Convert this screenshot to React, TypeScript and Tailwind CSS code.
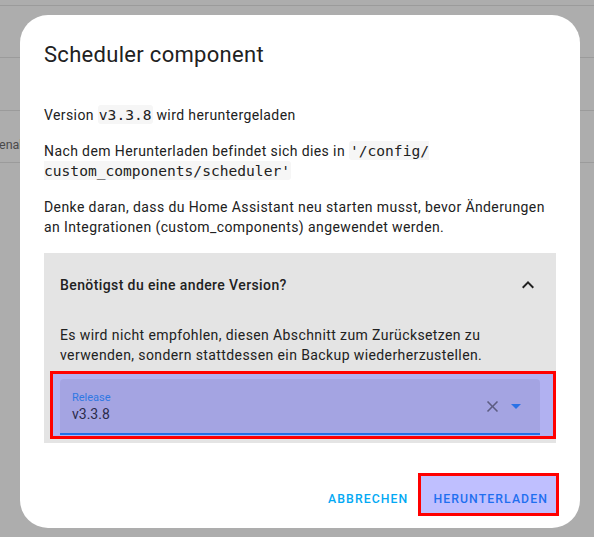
import React from "react";

function ChevronUp() {
  return (
    <svg width="24" height="24" viewBox="0 0 24 24" className="block">
      <path d="M7.41,15.41L12,10.83L16.59,15.41L18,14L12,8L6,14L7.41,15.41Z" fill="#212121" />
    </svg>
  );
}

function CloseIcon() {
  return (
    <svg width="19" height="19" viewBox="0 0 24 24" className="block">
      <path
        d="M19,6.41L17.59,5L12,10.59L6.41,5L5,6.41L10.59,12L5,17.59L6.41,19L12,13.41L17.59,19L19,17.59L13.41,12L19,6.41Z"
        fill="#5d5d82"
      />
    </svg>
  );
}

function MenuDown() {
  return (
    <svg width="24" height="24" viewBox="0 0 24 24" className="block">
      <path d="M7,10L12,15L17,10H7Z" fill="#2a72e6" />
    </svg>
  );
}

function Code({ children }: { children: React.ReactNode }) {
  return (
    <code className="font-['DejaVu_Sans_Mono',monospace] text-[14.6px] tracking-normal bg-[#f6f6f6] px-[1px] py-[1px] rounded-[3px] text-[#212121]">
      {children}
    </code>
  );
}

export default function App() {
  return (
    <div className="relative w-[594px] h-[537px] overflow-hidden bg-[#adadad] font-[Roboto,sans-serif]">
      {/* background page rows */}
      <div className="flex flex-col">
        <div className="h-[5px]" />
        <div className="h-[52px] border-t border-[#9b9b9b]" />
        <div className="h-[53px] border-t border-[#9b9b9b]" />
        <div className="h-[52px] border-t border-[#9b9b9b] pt-[24px]">
          <span className="block -ml-[1px] text-[12.5px] leading-[20px] text-[#4a4a4a]">enabled</span>
        </div>
        <div className="border-t border-[#9b9b9b]" />
      </div>

      {/* dialog */}
      <div className="absolute left-[20px] top-[15px] w-[560px] h-[513px] rounded-[28px] bg-white flex flex-col px-[24px] pt-[24px]">
        <div className="text-[22px] leading-[32px] tracking-[0.3px] text-[#212121]">Scheduler component</div>

        <div className="mt-[34px] flex flex-col gap-[16px] text-[14px] leading-[20px] tracking-[0.4px] text-[#212121]">
          <p>
            Version <Code>v3.3.8</Code> wird heruntergeladen
          </p>
          <p>
            Nach dem Herunterladen befindet sich dies in{" "}
            <Code>
              '/config/
              <br />
              custom_components/scheduler'
            </Code>
          </p>
          <p>
            Denke daran, dass du Home Assistant neu starten musst, bevor Änderungen an Integrationen
            (custom_components) angewendet werden.
          </p>
        </div>

        {/* expansion panel */}
        <div className="mt-[16px] bg-[#e4e4e4] flex flex-col pb-[4px]">
          <div className="h-[64px] flex items-center justify-between pl-[16px] pr-[16px]">
            <span className="text-[14px] leading-[20px] tracking-[0.4px] font-medium text-[#212121]">
              Benötigst du eine andere Version?
            </span>
            <ChevronUp />
          </div>
          <div className="pt-[8px] px-[16px] text-[14px] leading-[20px] tracking-[0.4px] text-[#212121]">
            Es wird nicht empfohlen, diesen Abschnitt zum Zurücksetzen zu verwenden, sondern stattdessen ein
            Backup wiederherzustellen.
          </div>
          <div className="mt-[6px] ml-[6px] border-[3px] border-[#ff0000] bg-[#b1b1f1] pt-[5px] pb-[1px] pl-[7px] pr-[13px]">
            <div className="h-[56px] bg-[#a4a4e2] rounded-t-[4px] border-b-2 border-[#2070e8] flex items-center pl-[12px] pr-[12px]">
              <div className="flex-1 flex flex-col pt-[2px]">
                <span className="text-[11px] leading-[14px] text-[#2f78e2]">Release</span>
                <span className="text-[14px] leading-[18px] text-[#2b2b4b]">v3.3.8</span>
              </div>
              <div className="flex items-center gap-[2px]">
                <CloseIcon />
                <MenuDown />
              </div>
            </div>
          </div>
        </div>

        {/* footer */}
        <div className="mt-[30px] -mr-[3px] flex justify-end items-start">
          <span className="mt-[16px] mr-[10px] text-[12.25px] leading-[20px] font-medium tracking-[1.09px] text-[#03a9f4]">
            ABBRECHEN
          </span>
          <div className="border-[3px] border-[#ff0000] bg-[#bfbfff] pt-[13px] pb-[4px] pl-[12px] pr-[8px]">
            <span className="block text-[12.25px] leading-[20px] font-medium tracking-[1.09px] text-[#1f6ff0]">
              HERUNTERLADEN
            </span>
          </div>
        </div>
      </div>
    </div>
  );
}
